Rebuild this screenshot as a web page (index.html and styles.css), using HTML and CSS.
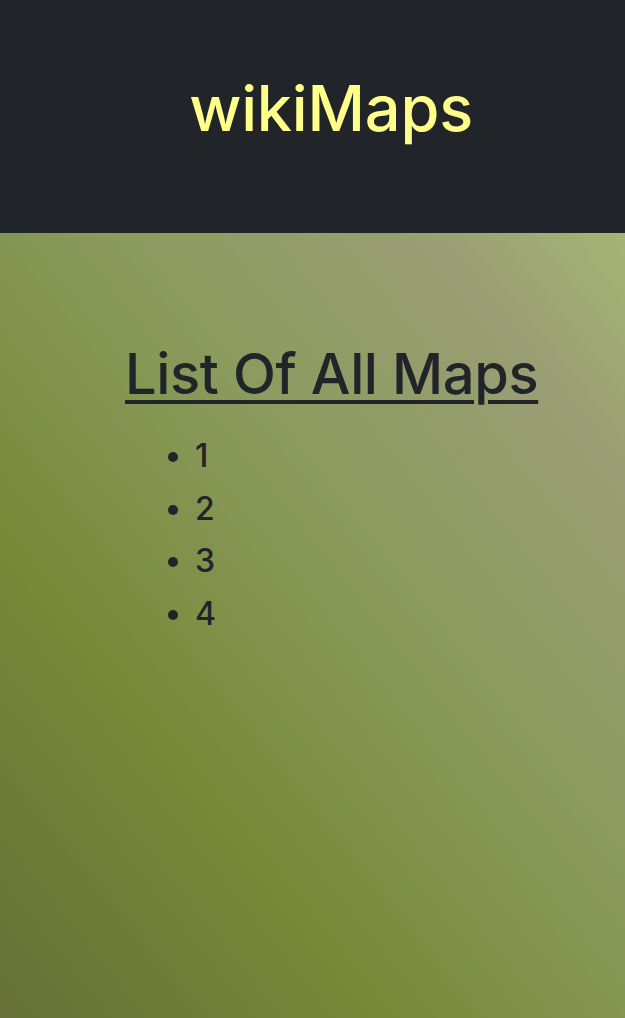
FILE: index.html
```html
<!DOCTYPE html>
<html>
<head>
<meta charset="utf-8">
<link rel="stylesheet" href="styles.css">
</head>
<body>
<header class="topbar">
  <h1 class="brand">wikiMaps</h1>
</header>
<main class="content">
  <section class="maps">
    <h2 class="maps-title">List Of All Maps</h2>
    <ul class="maps-list">
      <li>1</li>
      <li>2</li>
      <li>3</li>
      <li>4</li>
    </ul>
  </section>
</main>
</body>
</html>
```
FILE: styles.css
```css
html, body {
  margin: 0;
  padding: 0;
  height: 100%;
}
body {
  font-family: Inter, "Noto Sans", sans-serif;
  color: #212429;
  display: flex;
  flex-direction: column;
  min-height: 1018px;
}
.topbar {
  background: #212429;
  height: 233px;
  display: flex;
  align-items: center;
  justify-content: center;
  flex-shrink: 0;
}
.brand {
  margin: 0;
  color: #ffff8a;
  font-size: 63px;
  font-weight: 500;
  letter-spacing: -0.2px;
  line-height: 1;
  padding-left: 37px;
  padding-bottom: 16px;
}
.content {
  flex: 1;
  background: linear-gradient(to top right, #667038 0%, #778838 30%, #8b9a5c 58%, #9a9e74 84%, #a6b474 100%);
}
.maps {
  padding: 108px 0 0 125px;
}
.maps-title {
  margin: 0;
  font-size: 56px;
  font-weight: 500;
  letter-spacing: -0.4px;
  line-height: 1.2;
  text-decoration: underline;
  text-decoration-thickness: 4px;
  text-underline-offset: 6px;
}
.maps-list {
  margin: 22px 0 0;
  padding-left: 70px;
  font-size: 32px;
  font-weight: 500;
  line-height: 52.5px;
}
```
